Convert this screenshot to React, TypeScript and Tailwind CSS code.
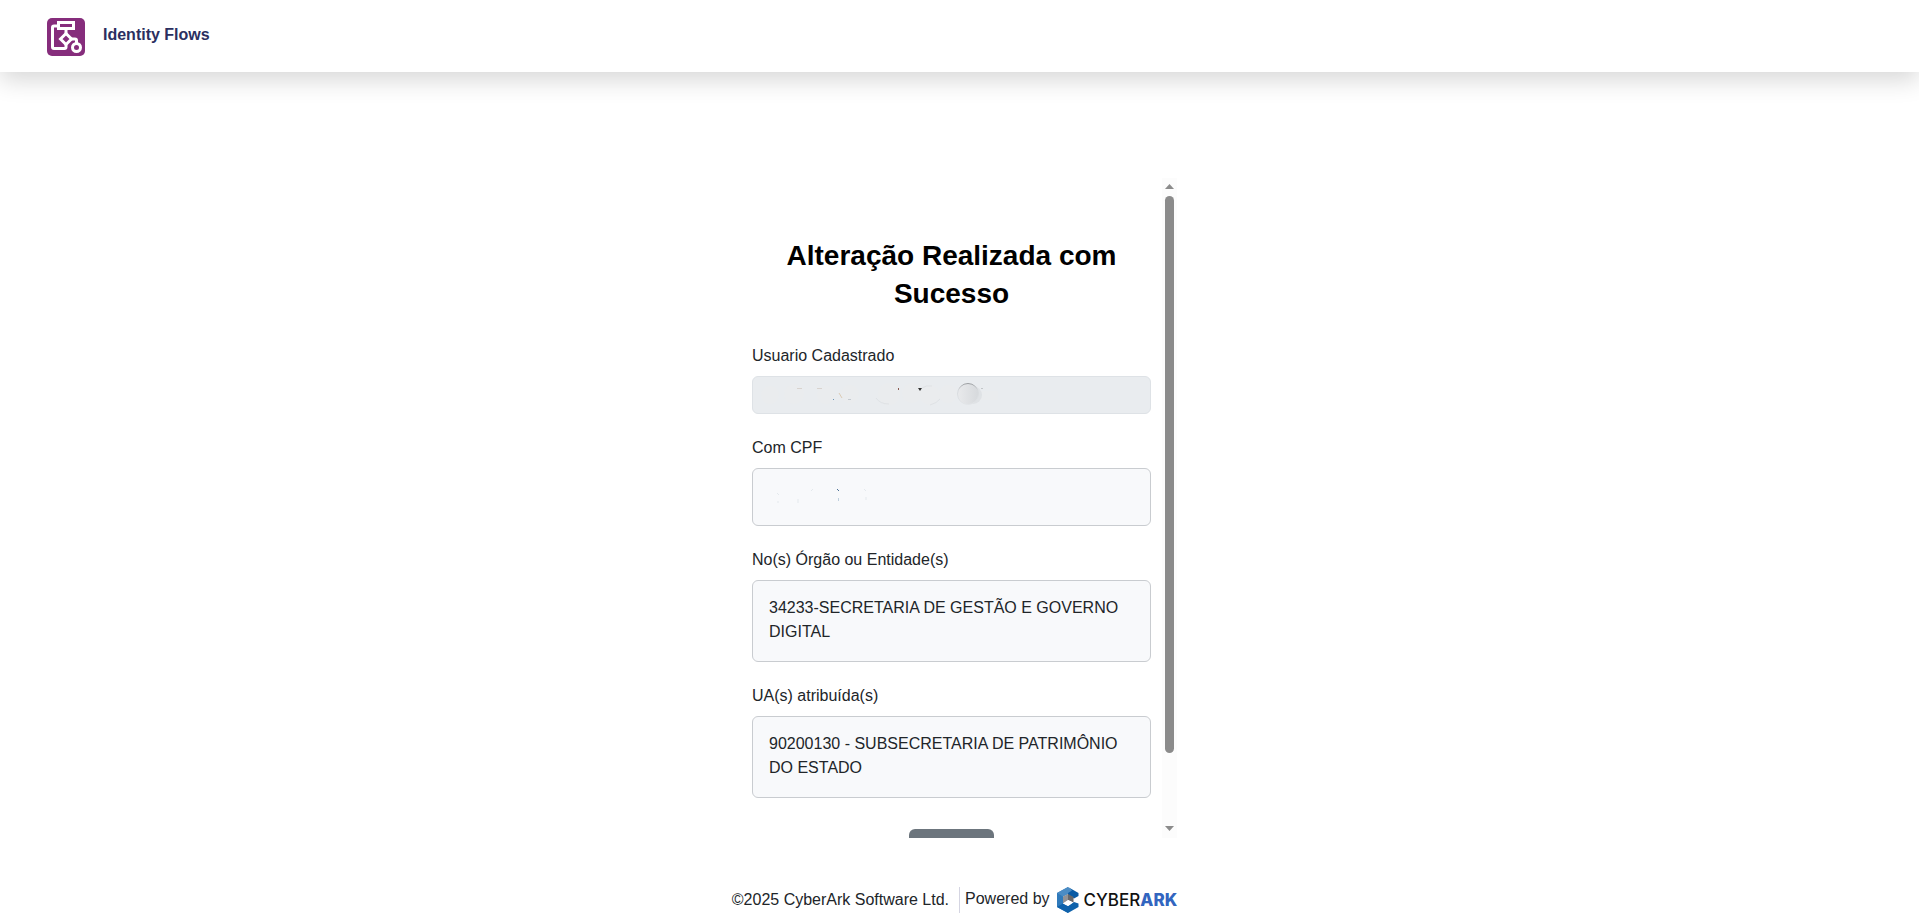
import React from "react";

function FlowsLogo() {
  return (
    <svg viewBox="0 0 38 38" className="h-[38px] w-[38px]" fill="none" aria-hidden="true">
      <rect width="38" height="38" rx="5" fill="#862d7c" />
      <g stroke="#fff" strokeWidth="3">
        <path d="M12 8H7Q5.5 8 5.5 9.5V29Q5.5 30.5 7 30.5H17.5Q19 30.5 19 29V26" />
        <rect x="11.5" y="4.5" width="15" height="6" />
        <path d="M19 11V16" />
        <path d="M19 15.5L24.5 21L19 26.5L13.5 21Z" />
        <path d="M24 21H28Q29.5 21 29.5 22.5V25" />
        <circle cx="29.5" cy="29.5" r="4" fill="#862d7c" />
      </g>
    </svg>
  );
}

function CyberArkLogo() {
  return (
    <a href="#" aria-label="CyberArk" className="flex items-center gap-[5px]">
      <svg viewBox="0 0 22 26" className="h-[26px] w-[22px]" aria-hidden="true">
        <path d="M11 0L0 6V20L11 26V19L6 16.5V9.5L11 7Z" fill="#2f7abb" />
        <path d="M11 0L0 6L6 9.5L11 7L16 4Z" fill="#4b8cc4" />
        <path d="M11 0L21.5 6V9L17 11.5L11 8V6L15 3.5Z" fill="#0a5ba5" />
        <path d="M0 20L11 26L21.5 20V16.5L17 15L11 19L6 16.5Z" fill="#0f62ab" />
        <path d="M11 7L6 9.5V16.5L11 13.5Z" fill="#929295" />
        <path d="M11 7L16.5 10V15.5L11 13Z" fill="#68686b" />
        <path d="M11 13L6 16.5L11 19L16 15.5Z" fill="#fff" />
      </svg>
      <span className="font-['Inter',sans-serif] text-[17px] leading-6 font-medium text-[#111]">
        CYBER<span className="font-extrabold text-[#3265bf]">ARK</span>
      </span>
    </a>
  );
}

function UserSmudge() {
  return (
    <svg viewBox="0 0 260 38" className="pointer-events-none col-start-1 row-start-1 h-[38px] w-[260px]" fill="none" aria-hidden="true">
      <defs>
        <linearGradient id="ball" x1="0" y1="0" x2="1" y2="0">
          <stop offset="0" stopColor="#e9eaec" />
          <stop offset="1" stopColor="#d6d9dc" />
        </linearGradient>
        <linearGradient id="rim" x1="0" y1="0" x2="0" y2="1">
          <stop offset="0" stopColor="#9a9da0" />
          <stop offset="0.3" stopColor="#d6d9dc" />
          <stop offset="1" stopColor="#e2e5e8" />
        </linearGradient>
      </defs>
      <g fill="#eaecee">
        <circle cx="18" cy="19" r="9" />
        <circle cx="42" cy="18" r="10" />
        <circle cx="74" cy="19" r="9" />
        <circle cx="98" cy="18" r="9" />
        <circle cx="137" cy="18" r="11" />
        <circle cx="160" cy="17" r="10" />
        <circle cx="178" cy="19" r="10" />
        <circle cx="196" cy="18" r="9" />
        <rect x="226" y="15" width="20" height="9" />
      </g>
      <path d="M124 22Q128 28 137 28M170 12Q174 9 180 10M178 29Q185 27 188 23" stroke="#dfe2e5" />
      <circle cx="221" cy="19" r="9" fill="#dfe2e5" />
      <circle cx="216" cy="18" r="10.5" fill="url(#ball)" stroke="url(#rim)" />
      <path d="M87 17L90 22" stroke="#dccbb5" />
      <path d="M45 12.5H50M65 12.5H70" stroke="#d8d3cf" />
      <rect x="81" y="23" width="1" height="1" fill="#6c95b8" />
      <rect x="96" y="23" width="3" height="1" fill="#c5cad0" />
      <rect x="146" y="12" width="1" height="2" fill="#8a5a50" />
      <path d="M166 12H170L168 15Z" fill="#333" />
      <rect x="229" y="12" width="2" height="1" fill="#c3c6c9" />
    </svg>
  );
}

function CpfSmudge() {
  return (
    <svg viewBox="0 0 110 24" className="h-6 w-[110px]" fill="none" aria-hidden="true">
      <path d="M8 9L10 11M9 17V19M29 15V19M42 7L44 5M95 5L97 7M97 13V16" stroke="#e4e9ed" />
      <path d="M68 5L70 7" stroke="#4f7396" />
      <path d="M69.5 14V17" stroke="#bfd0de" />
    </svg>
  );
}

function Scrollbar() {
  return (
    <div className="flex w-[15px] shrink-0 flex-col items-center bg-[#fcfcfc] pt-1.5 pb-[7px]">
      <svg viewBox="0 0 9 5" className="h-[5px] w-[9px]" aria-hidden="true">
        <path d="M4.5 0L9 5H0Z" fill="#8b8b8b" />
      </svg>
      <div className="mt-[7px] h-[557px] w-[9px] rounded-full bg-[#8b8b8b]" />
      <svg viewBox="0 0 9 5" className="mt-auto h-[5px] w-[9px]" aria-hidden="true">
        <path d="M0 0H9L4.5 5Z" fill="#8b8b8b" />
      </svg>
    </div>
  );
}

function InfoBox({ label, children }: { label: string; children: React.ReactNode }) {
  return (
    <div className="flex flex-col gap-2">
      <div>{label}</div>
      <div className="rounded-md border border-[#c9ccd0] bg-[#f8f9fb] px-4 pt-[15px] pb-[17px]">
        {children}
      </div>
    </div>
  );
}

export default function App() {
  return (
    <div className="flex min-h-screen flex-col bg-white font-['Liberation_Sans',Arial,sans-serif] text-base leading-6 text-[#212529]">
      <header className="flex h-[72px] shrink-0 items-center gap-[18px] bg-white px-[47px] pt-0.5 shadow-[0_8px_24px_rgba(0,0,0,0.16)]">
        <FlowsLogo />
        <div className="pb-1 font-bold text-[#2b2f60]">Identity Flows</div>
      </header>

      <main className="mx-auto mt-[106px] flex h-[660px] w-full max-w-[435px]">
        <form className="flex flex-1 flex-col overflow-hidden pt-[59px] pr-[11px] pl-2.5">
          <h1 className="mb-[31px] text-center text-[28px] leading-[38px] font-bold text-black">
            Alteração Realizada com Sucesso
          </h1>
          <div className="flex flex-col gap-[22px]">
            <div className="flex flex-col gap-2">
              <label htmlFor="usuario">Usuario Cadastrado</label>
              <div className="grid">
                <input
                  id="usuario"
                  disabled
                  className="col-start-1 row-start-1 h-[38px] w-full rounded-md border border-[#dee2e6] bg-[#e9ecef] px-3"
                />
                <UserSmudge />
              </div>
            </div>
            <InfoBox label="Com CPF">
              <CpfSmudge />
            </InfoBox>
            <InfoBox label="No(s) Órgão ou Entidade(s)">
              34233-SECRETARIA DE GESTÃO E GOVERNO DIGITAL
            </InfoBox>
            <InfoBox label="UA(s) atribuída(s)">
              90200130 - SUBSECRETARIA DE PATRIMÔNIO DO ESTADO
            </InfoBox>
          </div>
          <button
            type="button"
            aria-label="Voltar"
            className="mx-auto mt-[31px] h-[38px] w-[85px] shrink-0 rounded-md bg-[#6c757d]"
          />
        </form>
        <Scrollbar />
      </main>

      <footer className="mt-[49px] flex items-center justify-center pr-2.5">
        <span>©2025 CyberArk Software Ltd.</span>
        <div className="ml-2.5 flex items-center gap-[7px] border-l border-[#d5d5e2] pl-[5px]">
          <span className="pb-0.5">Powered by</span>
          <CyberArkLogo />
        </div>
      </footer>
    </div>
  );
}
